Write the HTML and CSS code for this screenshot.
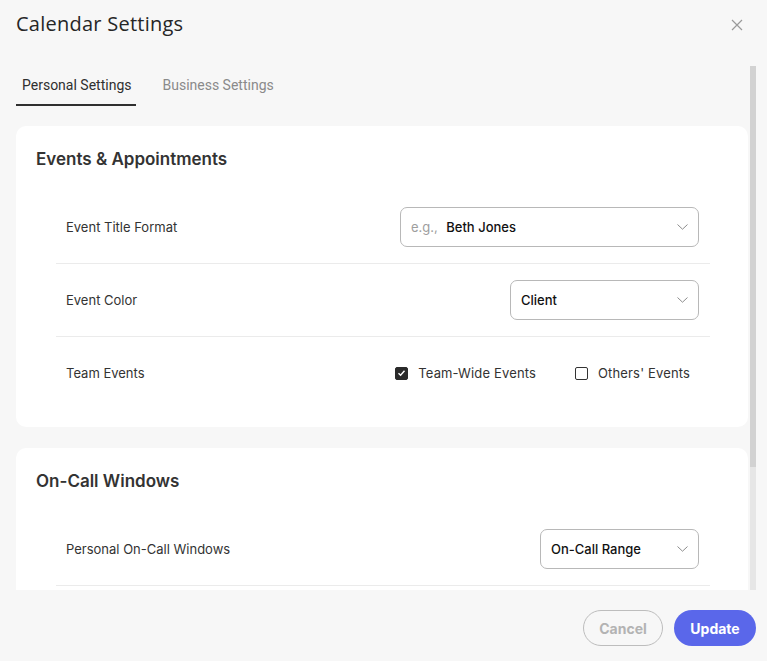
FILE: index.html
```html
<!DOCTYPE html>
<html lang="en">
<head>
<meta charset="utf-8">
<title>Calendar Settings</title>
<link rel="stylesheet" href="styles.css">
</head>
<body>
<div class="modal">
  <header class="modal-header">
    <h1 class="modal-title">Calendar Settings</h1>
    <button class="close-btn" aria-label="Close">
      <svg width="12" height="12" viewBox="0 0 12 12"><path d="M1 1 L11 11 M11 1 L1 11" stroke="#9a9a9a" stroke-width="1.2" fill="none"/></svg>
    </button>
  </header>

  <div class="scroll-area">
    <div class="scroll-content">
      <nav class="tabs">
        <div class="tab tab-active">Personal Settings</div>
        <div class="tab">Business Settings</div>
      </nav>

      <section class="card">
        <h2 class="card-title">Events &amp; Appointments</h2>
        <div class="rows">
          <div class="row">
            <span class="row-label">Event Title Format</span>
            <div class="select select-wide">
              <span class="select-value"><span class="placeholder">e.g.,</span> Beth Jones</span>
              <svg class="chevron" width="11" height="6" viewBox="0 0 11 6"><path d="M0.5 0.5 L5.5 5.2 L10.5 0.5" stroke="#8c8c8c" stroke-width="1" fill="none"/></svg>
            </div>
          </div>
          <div class="row">
            <span class="row-label">Event Color</span>
            <div class="select select-mid">
              <span class="select-value">Client</span>
              <svg class="chevron" width="11" height="6" viewBox="0 0 11 6"><path d="M0.5 0.5 L5.5 5.2 L10.5 0.5" stroke="#8c8c8c" stroke-width="1" fill="none"/></svg>
            </div>
          </div>
          <div class="row">
            <span class="row-label">Team Events</span>
            <div class="checks">
              <label class="check">
                <span class="box box-checked">
                  <svg width="9" height="8" viewBox="0 0 9 8"><path d="M1.5 4.2 L3.6 6.2 L7.5 1.8" stroke="#fff" stroke-width="1.4" fill="none"/></svg>
                </span>
                <span class="check-text">Team-Wide Events</span>
              </label>
              <label class="check">
                <span class="box"></span>
                <span class="check-text">Others' Events</span>
              </label>
            </div>
          </div>
        </div>
      </section>

      <section class="card">
        <h2 class="card-title">On-Call Windows</h2>
        <div class="rows">
          <div class="row row-divided">
            <span class="row-label">Personal On-Call Windows</span>
            <div class="select select-small">
              <span class="select-value">On-Call Range</span>
              <svg class="chevron" width="11" height="6" viewBox="0 0 11 6"><path d="M0.5 0.5 L5.5 5.2 L10.5 0.5" stroke="#8c8c8c" stroke-width="1" fill="none"/></svg>
            </div>
          </div>
        </div>
      </section>
    </div>
    <div class="scrollbar"><div class="scroll-thumb"></div></div>
  </div>

  <footer class="modal-footer">
    <button class="btn btn-cancel">Cancel</button>
    <button class="btn btn-primary">Update</button>
  </footer>
</div>
</body>
</html>
```

FILE: styles.css
```css
* { box-sizing: border-box; }

html, body {
  margin: 0;
  padding: 0;
}

body {
  background: #f7f7f7;
  font-family: Inter, "Noto Sans", sans-serif;
  color: #333;
  width: 767px;
  height: 661px;
  overflow: hidden;
}

.modal {
  display: flex;
  flex-direction: column;
  height: 661px;
}

.modal-header {
  height: 66px;
  display: flex;
  align-items: flex-start;
  justify-content: space-between;
  padding: 12px 24px 0 16px;
}

.modal-title {
  margin: 0;
  font-family: "Open Sans", sans-serif;
  font-weight: 500;
  font-size: 20px;
  letter-spacing: 0.25px;
  line-height: 24px;
  color: #262626;
}

.close-btn {
  border: 0;
  background: transparent;
  padding: 0;
  margin-top: 7px;
  width: 12px;
  height: 12px;
  display: flex;
}

.scroll-area {
  height: 524px;
  display: flex;
  overflow: hidden;
}

.scroll-content {
  flex: 1;
  padding: 0 2px 0 16px;
  overflow: hidden;
}

.scrollbar {
  width: 6px;
  margin-right: 11px;
  background: #e6e6e6;
  height: 524px;
}

.scroll-thumb {
  height: 401px;
  background: #d2d2d2;
}

.tabs {
  display: flex;
  gap: 20px;
  margin-bottom: 20px;
}

.tab {
  font-family: Roboto, sans-serif;
  font-size: 14px;
  line-height: 20px;
  padding: 9px 5px 9px 6px;
  border-bottom: 2px solid transparent;
  color: #8a8a8a;
}

.tab-active {
  color: #2f2f2f;
  border-bottom-color: #2f2f2f;
}

.card {
  background: #fff;
  border-radius: 10px;
  padding: 21px 20px 18px 20px;
  margin-bottom: 21px;
}

.card-title {
  margin: 0 0 20px 0;
  font-size: 17px;
  line-height: 24px;
  font-weight: 600;
  color: #333;
}

.rows {
  margin: 0 18px 0 20px;
}

.row {
  display: flex;
  align-items: center;
  justify-content: space-between;
  min-height: 72px;
  padding: 16px 11px 16px 10px;
  border-bottom: 1px solid #ebebeb;
}

.row:last-child {
  border-bottom: 0;
}

.row.row-divided {
  border-bottom: 1px solid #ebebeb;
}

.row-label {
  font-size: 13px;
  line-height: 18px;
  color: #333;
}

.select {
  height: 40px;
  border: 1px solid #b8b8b8;
  border-radius: 7px;
  display: flex;
  align-items: center;
  justify-content: space-between;
  padding: 0 10px 0 10px;
  font-size: 13px;
  font-weight: 500;
  color: #111;
}

.select-wide { width: 299px; }
.select-mid { width: 189px; }
.select-small { width: 159px; }

.placeholder {
  color: #9e9e9e;
  font-weight: 400;
  margin-right: 5px;
}

.chevron {
  display: block;
}

.checks {
  display: flex;
  gap: 39px;
  margin-right: 9px;
}

.check {
  display: flex;
  align-items: center;
  gap: 10px;
}

.box {
  width: 13px;
  height: 13px;
  border: 1.5px solid #333;
  border-radius: 2px;
  display: flex;
  align-items: center;
  justify-content: center;
}

.box-checked {
  background: #2a2a2a;
  border-color: #2a2a2a;
}

.check-text {
  font-size: 13px;
  line-height: 18px;
  letter-spacing: 0.15px;
  color: #333;
}

.modal-footer {
  flex: 1;
  display: flex;
  justify-content: flex-end;
  align-items: flex-start;
  gap: 11px;
  padding: 20px 11px 0 0;
}

.btn {
  height: 36px;
  border-radius: 18px;
  font-family: Inter, sans-serif;
  font-weight: 700;
  font-size: 14px;
  padding: 0;
}

.btn-cancel {
  width: 80px;
  background: transparent;
  border: 1px solid #bdbdbd;
  color: #b3b3b3;
}

.btn-primary {
  width: 82px;
  background: #5a67ea;
  border: 0;
  color: #fff;
}
```
